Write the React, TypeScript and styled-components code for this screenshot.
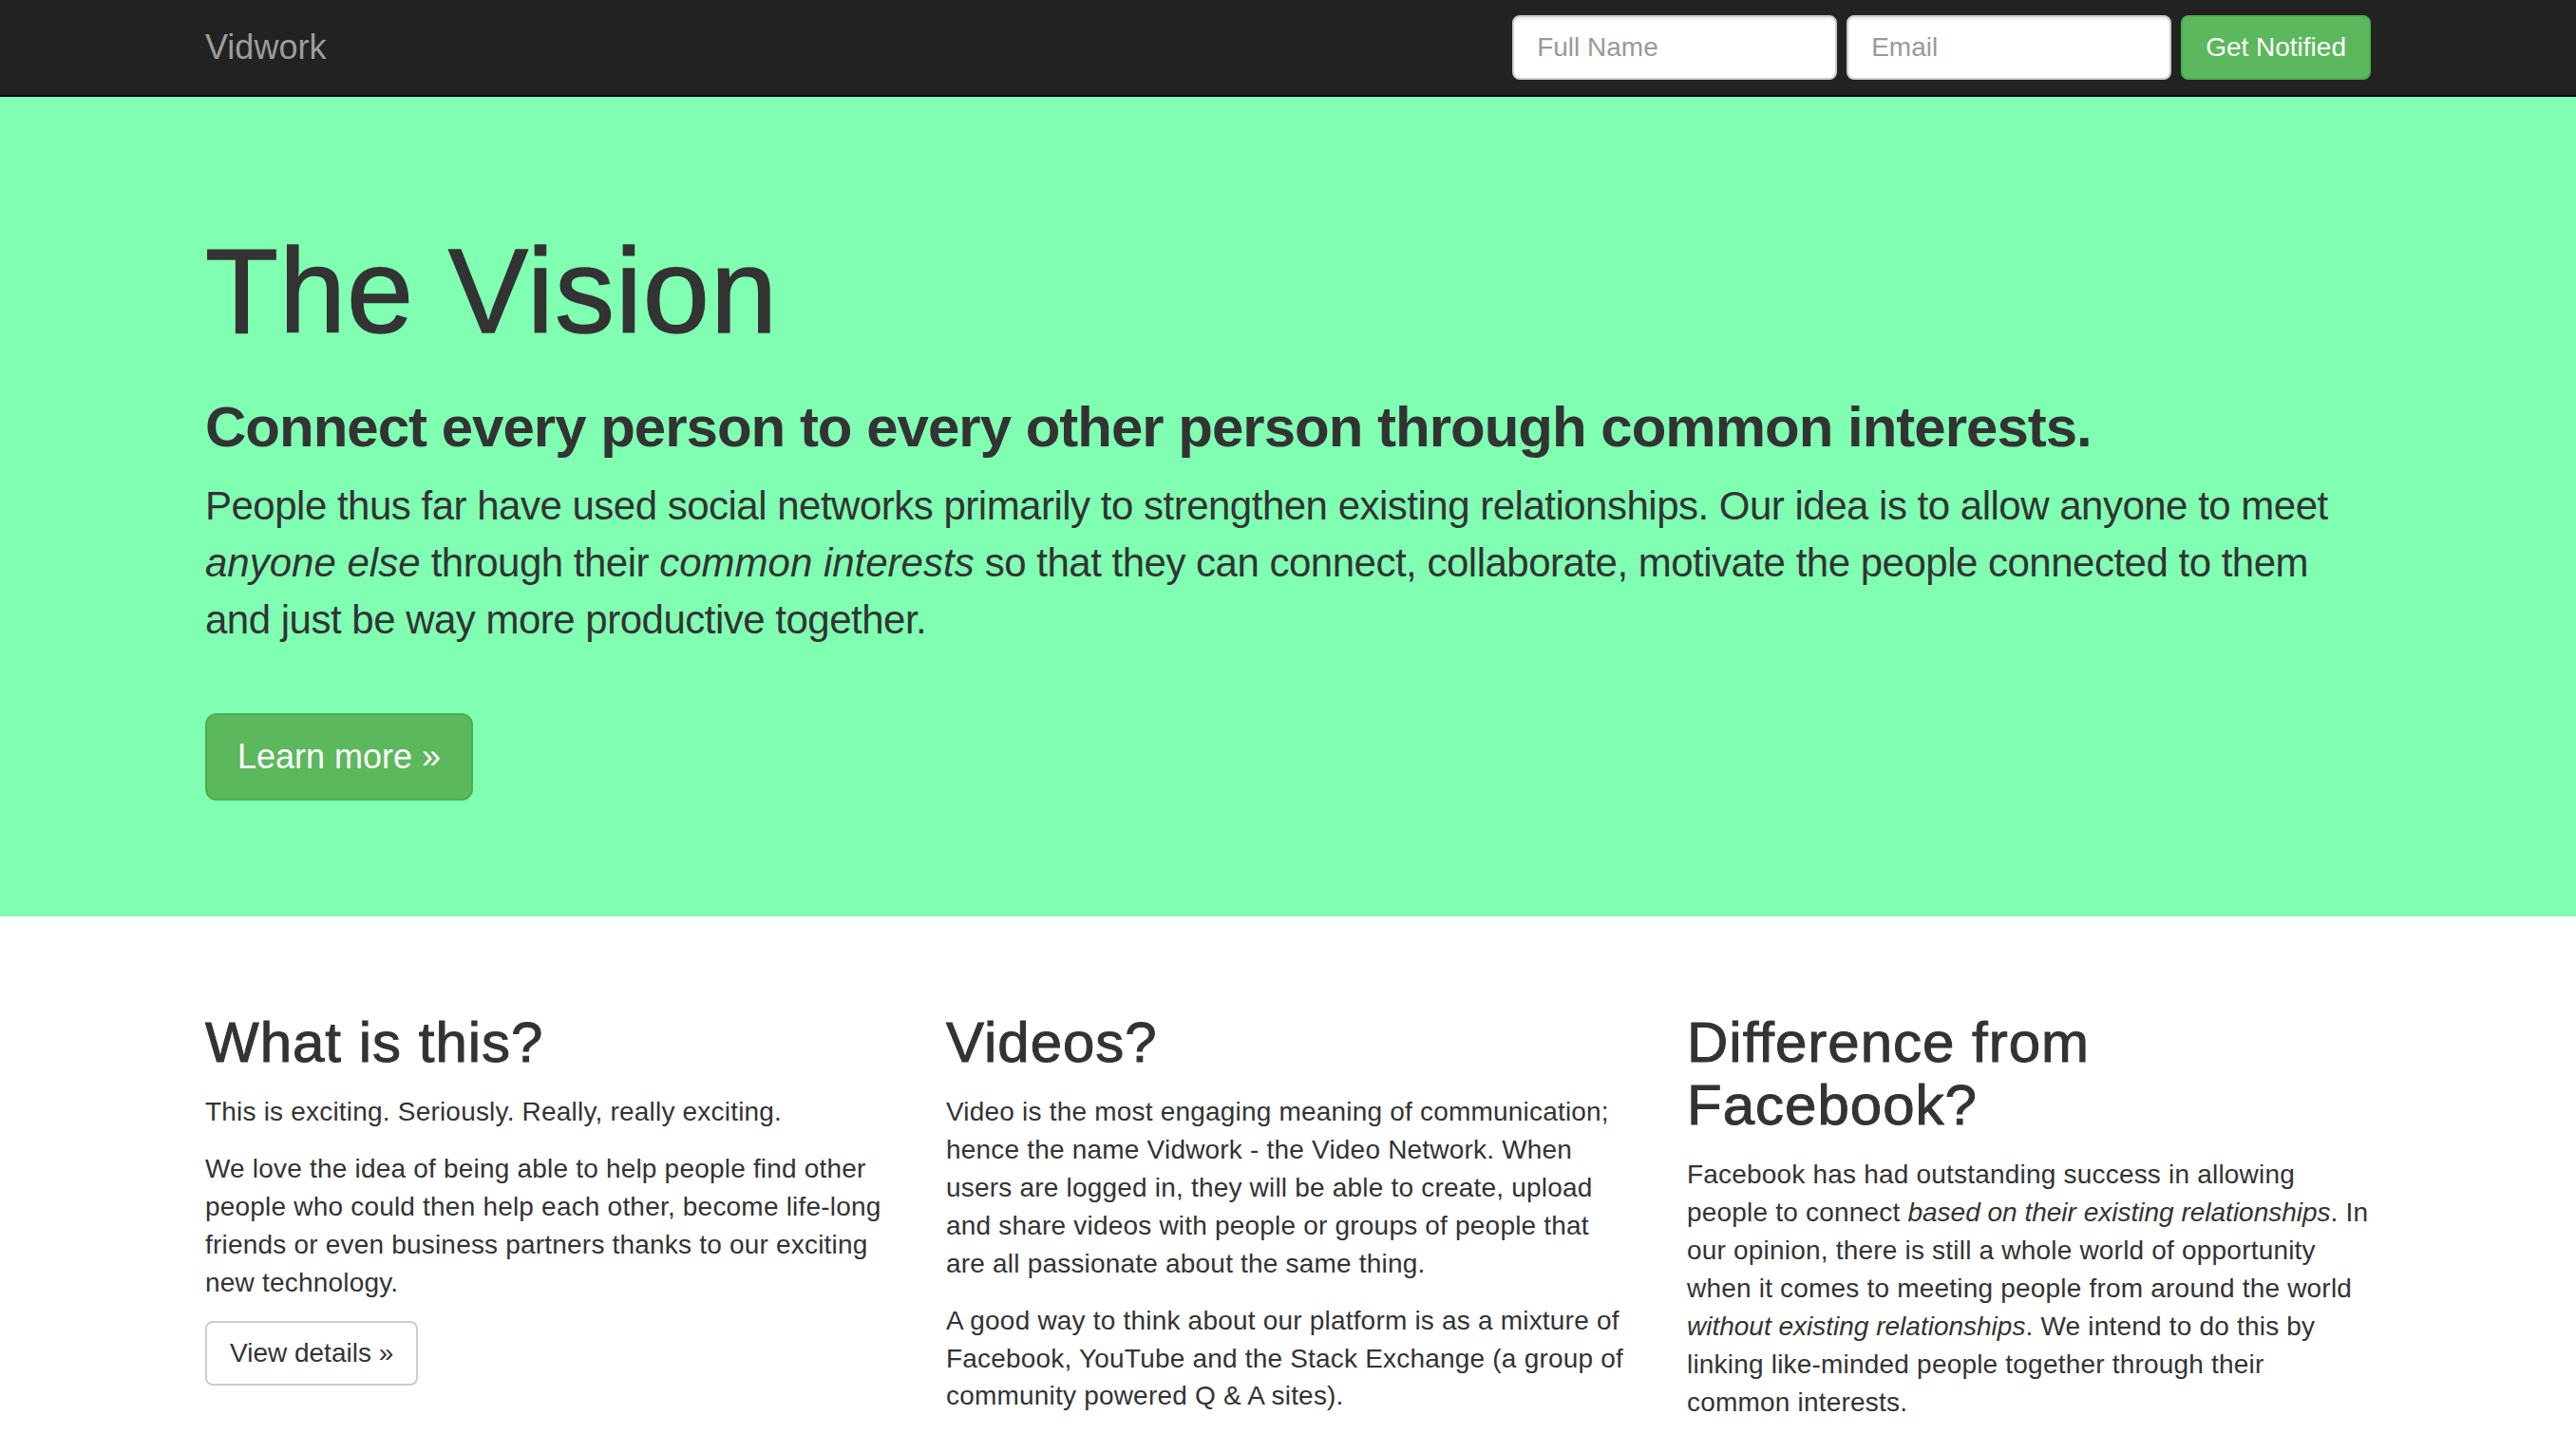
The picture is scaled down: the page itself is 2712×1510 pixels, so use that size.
import React from "react";
import styled, { createGlobalStyle } from "styled-components";

const GlobalStyle = createGlobalStyle`
  * { box-sizing: border-box; }
  html, body { margin: 0; padding: 0; }
  body {
    font-family: "Liberation Sans", Helvetica, Arial, sans-serif;
    font-size: 28px;
    line-height: 1.428571;
    color: #333;
    background: #fff;
  }
`;

const Navbar = styled.nav`
  background: #222;
  border-bottom: 2px solid #080808;
  height: 102px;
`;

const Container = styled.div`
  width: 2340px;
  margin: 0 auto;
  padding: 0 30px;
`;

const NavInner = styled(Container)`
  display: flex;
  align-items: center;
  justify-content: space-between;
  height: 100px;
`;

const Brand = styled.a`
  font-size: 36px;
  line-height: 40px;
  color: #9d9d9d;
  text-decoration: none;
`;

const NotifyForm = styled.form`
  display: flex;
  align-items: center;
  gap: 10px;
`;

const Input = styled.input`
  width: 342px;
  height: 68px;
  padding: 12px 24px;
  font-family: inherit;
  font-size: 28px;
  line-height: 40px;
  color: #555;
  background: #fff;
  border: 2px solid #ccc;
  border-radius: 8px;
  box-shadow: inset 0 2px 2px rgba(0, 0, 0, 0.075);
  &::placeholder { color: #999; }
`;

const Button = styled.button<{ $variant?: "success" | "default"; $size?: "lg" | "md" }>`
  display: inline-block;
  font-family: inherit;
  font-weight: 400;
  cursor: pointer;
  text-decoration: none;
  border: 2px solid ${(p) => (p.$variant === "default" ? "#ccc" : "#4cae4c")};
  background: ${(p) => (p.$variant === "default" ? "#fff" : "#5cb85c")};
  color: ${(p) => (p.$variant === "default" ? "#333" : "#fff")};
  font-size: ${(p) => (p.$size === "lg" ? "36px" : "28px")};
  line-height: ${(p) => (p.$size === "lg" ? "48px" : "40px")};
  padding: ${(p) => (p.$size === "lg" ? "20px 32px" : "12px 24px")};
  border-radius: ${(p) => (p.$size === "lg" ? "12px" : "8px")};
`;

const Jumbotron = styled.section`
  background: #80ffb3;
  padding: 96px 0;
  margin-bottom: 60px;
`;

const Title = styled.h1`
  font-size: 126px;
  line-height: 1.1;
  font-weight: 500;
  letter-spacing: 1px;
  margin: 40px 0 20px;
  -webkit-text-stroke: 1.5px #333;
`;

const Tagline = styled.h2`
  font-size: 60px;
  line-height: 1.1;
  font-weight: 700;
  letter-spacing: -1px;
  margin: 40px 0 20px;
`;

const Lead = styled.p`
  font-size: 42px;
  line-height: 60px;
  font-weight: 200;
  letter-spacing: -0.5px;
  margin: 0 0 30px;
  em { letter-spacing: 0; }
`;

const ActionRow = styled.p`
  margin: 68px 0 26px;
`;

const Row = styled.div`
  display: grid;
  grid-template-columns: repeat(3, 1fr);
  margin: 0 -30px;
`;

const Col = styled.div`
  padding: 0 30px;
`;

const ColTitle = styled.h2`
  font-size: 60px;
  line-height: 1.1;
  font-weight: 500;
  letter-spacing: 1px;
  margin: 40px 0 20px;
  -webkit-text-stroke: 1px #333;
`;

const Text = styled.p`
  margin: 0 0 20px;
  letter-spacing: 0.2px;
  em { letter-spacing: 0; }
`;

export default function App() {
  return (
    <>
      <GlobalStyle />
      <Navbar>
        <NavInner>
          <Brand href="#">Vidwork</Brand>
          <NotifyForm onSubmit={(e) => e.preventDefault()}>
            <Input type="text" placeholder="Full Name" />
            <Input type="email" placeholder="Email" />
            <Button type="submit" $variant="success">Get Notified</Button>
          </NotifyForm>
        </NavInner>
      </Navbar>

      <Jumbotron>
        <Container>
          <Title>The Vision</Title>
          <Tagline>Connect every person to every other person through common interests.</Tagline>
          <Lead>
            People thus far have used social networks primarily to strengthen existing relationships. Our idea
            is to allow anyone to meet <em>anyone else</em> through their <em>common interests</em> so that they
            can connect, collaborate, motivate the people connected to them and just be way more productive
            together.
          </Lead>
          <ActionRow>
            <Button $variant="success" $size="lg">Learn more »</Button>
          </ActionRow>
        </Container>
      </Jumbotron>

      <Container>
        <Row>
          <Col>
            <ColTitle>What is this?</ColTitle>
            <Text>This is exciting. Seriously. Really, really exciting.</Text>
            <Text>
              We love the idea of being able to help people find other people who could then help each other,
              become life-long friends or even business partners thanks to our exciting new technology.
            </Text>
            <Text>
              <Button $variant="default">View details »</Button>
            </Text>
          </Col>
          <Col>
            <ColTitle>Videos?</ColTitle>
            <Text>
              Video is the most engaging meaning of communication; hence the name Vidwork - the Video Network.
              When users are logged in, they will be able to create, upload and share videos with people or
              groups of people that are all passionate about the same thing.
            </Text>
            <Text>
              A good way to think about our platform is as a mixture of Facebook, YouTube and the Stack
              Exchange (a group of community powered Q &amp; A sites).
            </Text>
          </Col>
          <Col>
            <ColTitle>Difference from Facebook?</ColTitle>
            <Text>
              Facebook has had outstanding success in allowing people to connect{" "}
              <em>based on their existing relationships</em>. In our opinion, there is still a whole world of
              opportunity when it comes to meeting people from around the world{" "}
              <em>without existing relationships</em>. We intend to do this by linking like-minded people
              together through their common interests.
            </Text>
          </Col>
        </Row>
      </Container>
    </>
  );
}
